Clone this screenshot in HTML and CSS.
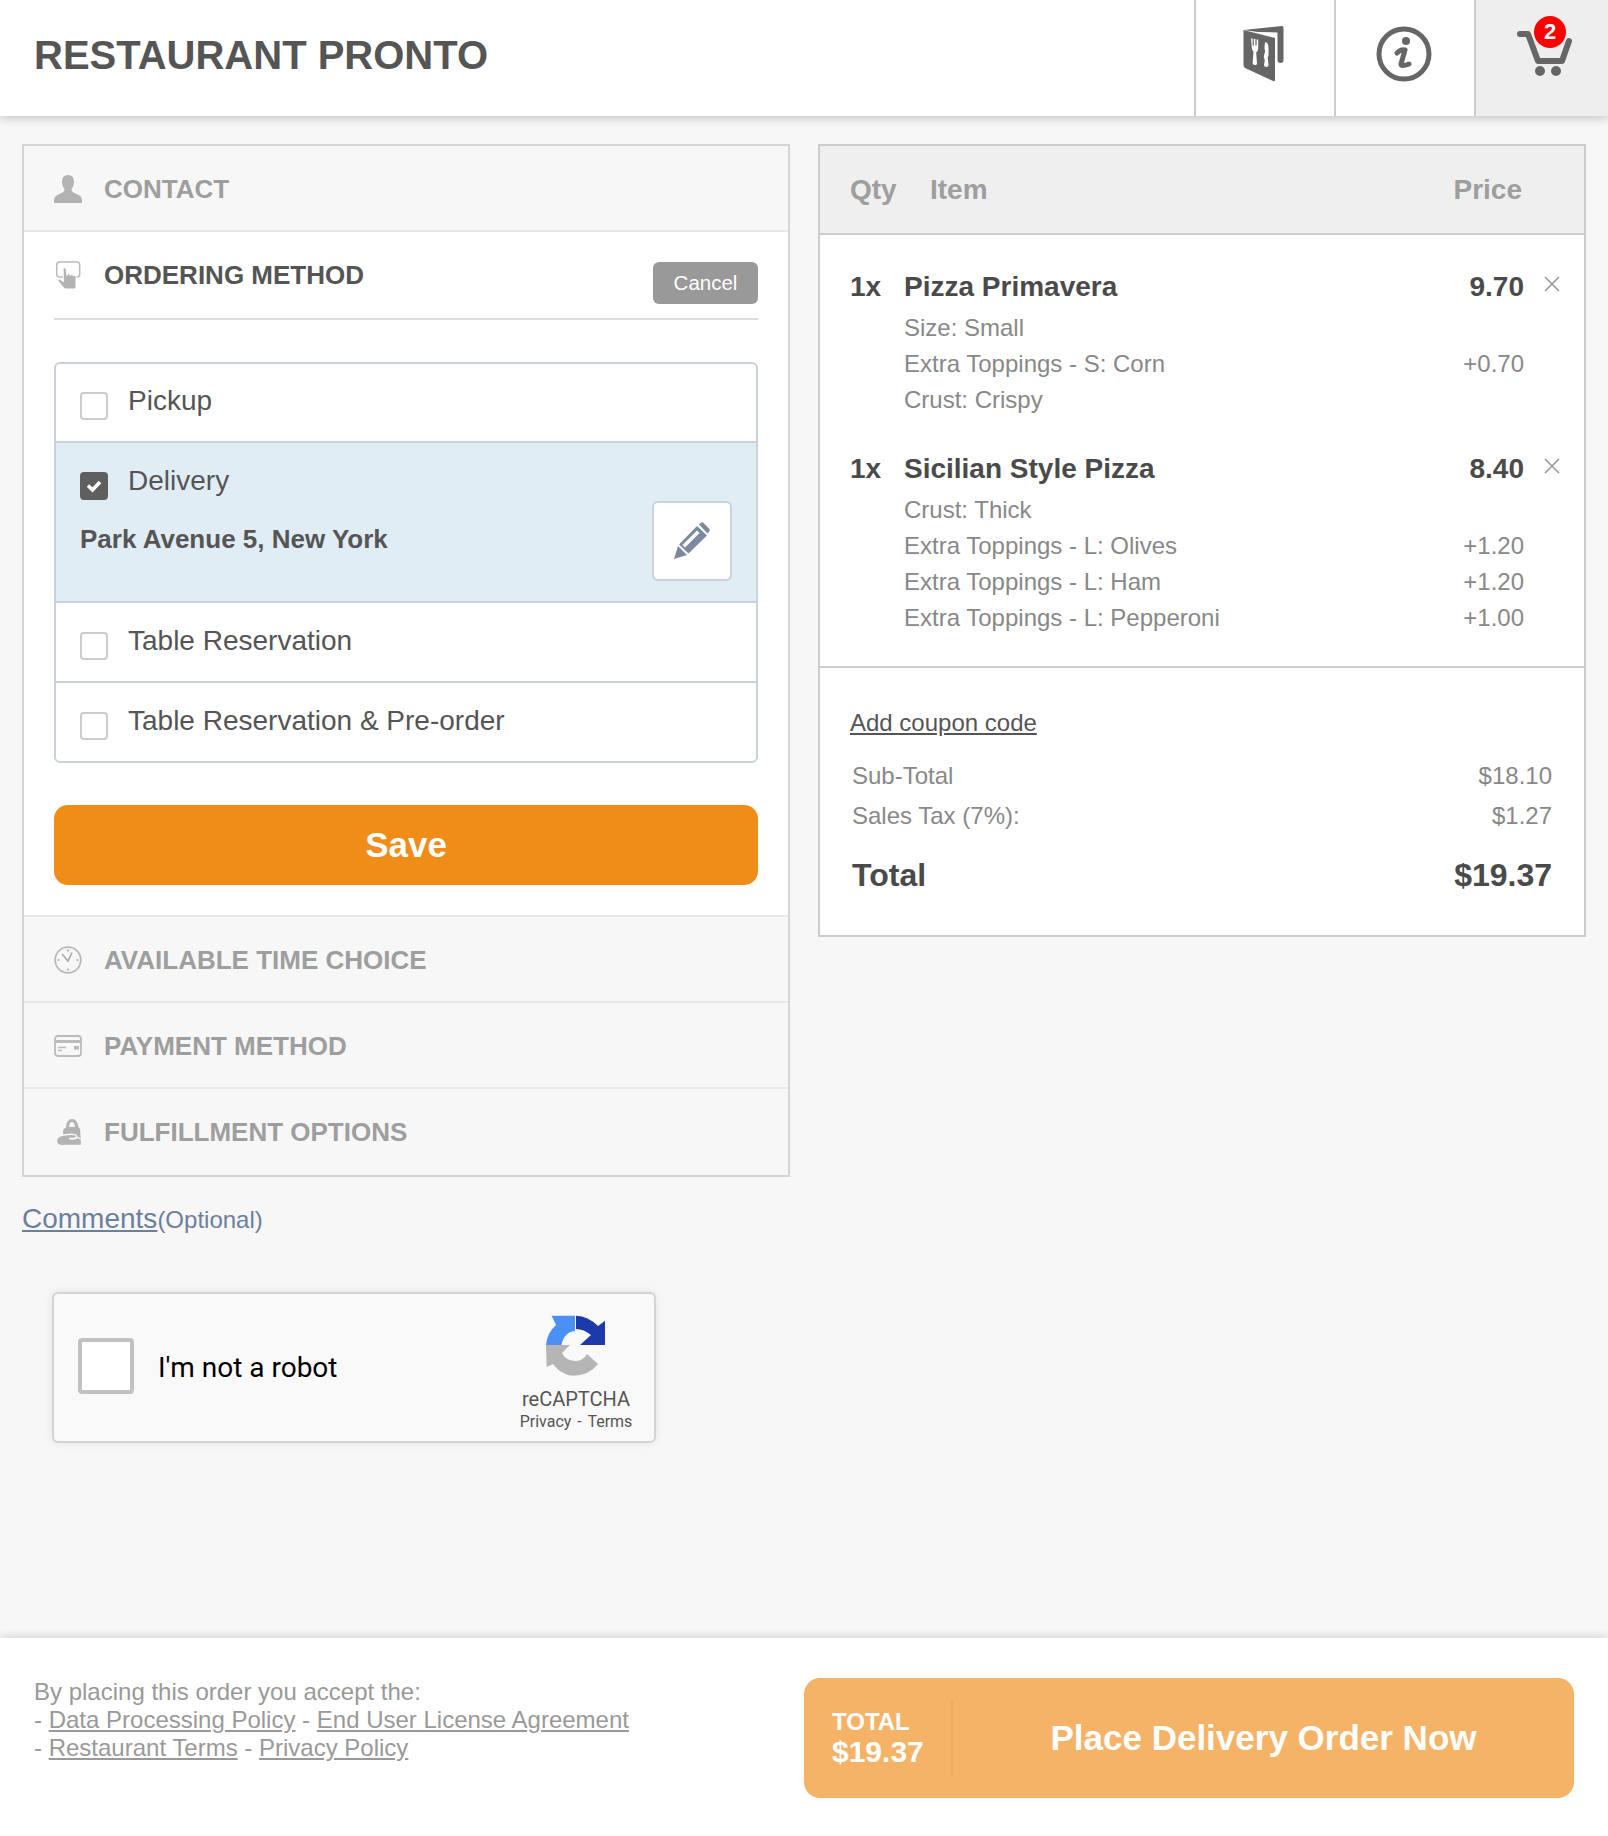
FILE: index.html
```html
<!DOCTYPE html>
<html lang="en">
<head>
<meta charset="utf-8">
<title>Restaurant Pronto</title>
<link rel="stylesheet" href="styles.css">
</head>
<body>
<div class="page">
  <header class="topbar">
    <h1 class="brand">RESTAURANT PRONTO</h1>
    <a class="nav-btn">
      <svg width="44" height="60" viewBox="0 0 44 60"><path class="fill-dark" d="M.5 6 L39 2 Q40.500 2 40.500 3.500 V36 Q40.500 39 37.500 39 Q34.500 39 34.500 36 V8.500 L15 8 Z"/><path class="fill-dark" d="M.5 6 L32 14 V56 Q32 58 30 57 L2 44 Q.5 43 .5 41 Z"/><path fill="#fff" d="M8 14.500 h1.6 v7 h1.200 v-6.500 h1.600 v6.500 h1.200 v-6 h1.600 v9 q0 3 -2 4 l.8 11 q0 2 -2.300 1.500 q-2.500 -.5 -2 -3 l.8 -10.500 q-1.700 -1 -1.700 -4z M22.500 18 q3 1 3 6 l0 8 l-.8 1 l.8 8 q0 2 -2 2 q-2.500 0 -2.500 -2.500 l.8 -4 l-1 -4 l1 -4 q.5 -2 -.3 -4 q0 -5 1 -6.500z"/></svg>
    </a>
    <a class="nav-btn">
      <svg width="58" height="58" viewBox="0 0 58 58"><circle cx="28" cy="29" r="25" fill="none" stroke="#666" stroke-width="5"/><circle cx="30" cy="16" r="4" fill="#666"/><path d="M21 28 Q25 24 29 25 L25 39 Q25 42 33 39" fill="none" stroke="#666" stroke-width="5" stroke-linecap="round" stroke-linejoin="round"/></svg>
    </a>
    <a class="nav-btn nav-btn-active">
      <svg width="60" height="54" viewBox="0 0 60 54"><path d="M8 10 H16 L26 37 H50 L57 17" fill="none" stroke="#666" stroke-width="6" stroke-linecap="round" stroke-linejoin="round"/><circle cx="28" cy="47" r="5" fill="#666"/><circle cx="44" cy="47" r="5" fill="#666"/></svg>
      <span class="badge">2</span>
    </a>
  </header>

  <main class="content">
    <section class="accordion">
      <div class="acc-row acc-first">
        <svg class="acc-icon" width="28" height="28" viewBox="0 0 28 28"><path fill="#b3b3b3" d="M14 0 q6 0 6 7 q0 4 -2.500 7 q0 3 4 4.500 q6.500 2 6.500 6.500 v3 H0 v-3 q0 -4.500 6.500 -6.500 q4 -1.500 4 -4.500 Q8 11 8 7 q0 -7 6 -7z"/></svg>
        <span class="acc-title">CONTACT</span>
      </div>

      <div class="acc-open">
        <div class="open-head">
          <svg class="acc-icon" width="28" height="32" viewBox="0 0 28 32"><rect x="2.700" y="3" width="23" height="15" rx="3" fill="none" stroke="#bbb" stroke-width="1.500"/><path fill="#b3b3b3" stroke="#fff" d="M9 9.500 q1.500 -1.500 3 0 l1 7 l1 -2 q1 -.5 2 .5 v1.500 l1 -1 q1 -.5 2 .5 l.5 1 l1 -.5 q1.500 0 1.500 1.500 v10 q0 2 -2 2 h-8 q-2 0 -3 -2 l-5 -6 q-.5 -2 1.500 -2 l4 2.500z"/></svg>
          <span class="acc-title acc-title-active">ORDERING METHOD</span>
          <button class="cancel">Cancel</button>
        </div>
        <div class="options">
          <div class="option">
            <span class="check"></span><span class="opt-label">Pickup</span>
          </div>
          <div class="option option-selected">
            <span class="check check-on"><svg width="18" height="14" viewBox="0 0 18 14"><path d="M3 6.500 L7.500 11 L15 3" fill="none" stroke="#fff" stroke-width="3.500"/></svg></span><span class="opt-label">Delivery</span>
            <div class="address">Park Avenue 5, New York</div>
            <button class="edit">
              <svg width="36" height="38" viewBox="0 0 36 38"><path fill="#7b8a9e" d="M0 37 L4 24 L13 33Z"/><path fill="#7b8a9e" d="M5 22.500 L23 4 L33 13.500 L14.500 31.500Z M8.500 23 L11 25.500 L25.500 11 L23 8.500Z"/><path fill="#7b8a9e" d="M25 2.500 L27 .5 Q28 0 29 .5 L35.500 7 Q36 8 35.500 9 L33.500 11.500Z"/></svg>
            </button>
          </div>
          <div class="option">
            <span class="check"></span><span class="opt-label">Table Reservation</span>
          </div>
          <div class="option">
            <span class="check"></span><span class="opt-label">Table Reservation &amp; Pre-order</span>
          </div>
        </div>
        <button class="save">Save</button>
      </div>

      <div class="acc-row">
        <svg class="acc-icon" width="28" height="28" viewBox="0 0 28 28"><circle cx="14" cy="14" r="12.800" fill="none" stroke="#bbb" stroke-width="1.800"/><path d="M14 5.500 V3.500 M14 24.500 V22.500 M5.500 14 H3.500 M24.500 14 H22.500 M8 8 L14 15 L18 6.500" fill="none" stroke="#aaa" stroke-width="1.600"/></svg>
        <span class="acc-title">AVAILABLE TIME CHOICE</span>
      </div>
      <div class="acc-row">
        <svg class="acc-icon" width="28" height="22" viewBox="0 0 28 22"><rect x="1" y="1" width="26" height="20" rx="3" fill="none" stroke="#bbb" stroke-width="1.800"/><rect x="1" y="5" width="26" height="3" fill="#bbb"/><path d="M4 12.500 H12 M4 15.500 H8" stroke="#bbb" stroke-width="1.500"/><rect x="20" y="11" width="5" height="3.500" fill="#bbb"/></svg>
        <span class="acc-title">PAYMENT METHOD</span>
      </div>
      <div class="acc-row">
        <svg class="acc-icon" width="28" height="30" viewBox="0 0 28 30"><path fill="#b3b3b3" fill-rule="evenodd" d="M18 2 q5.500 0 6.500 8.500 l1.500 1 l1 15 H10 L9 13.500 q1 -2 3 -3 q.5 -8.500 6 -8.500z M15 10 h6 q-.5 -5 -3 -5 t-3 5z"/><path fill="#b3b3b3" stroke="#f7f7f7" stroke-width="1.300" d="M2.500 24 q0 -5.500 8 -6 q7 -1.500 11.500 0 q2 2.500 -2 3.500 l-5 0 q5 1.500 9 -1 l3.500 2 v6 H11 Q2.500 29.500 2.500 24z"/></svg>
        <span class="acc-title">FULFILLMENT OPTIONS</span>
      </div>
    </section>

    <section class="cart">
      <div class="cart-head">
        <span class="col-qty">Qty</span>
        <span class="col-item">Item</span>
        <span class="col-price">Price</span>
      </div>
      <div class="cart-items">
        <div class="item">
          <div class="item-row">
            <span class="qty">1x</span><span class="name">Pizza Primavera</span><span class="price">9.70</span>
            <svg class="remove" width="16" height="16" viewBox="0 0 16 16"><path d="M1 1 L15 15 M15 1 L1 15" stroke="#999" stroke-width="1.600"/></svg>
          </div>
          <div class="sub"><span>Size: Small</span></div>
          <div class="sub"><span>Extra Toppings - S: Corn</span><span>+0.70</span></div>
          <div class="sub"><span>Crust: Crispy</span></div>
        </div>
        <div class="item">
          <div class="item-row">
            <span class="qty">1x</span><span class="name">Sicilian Style Pizza</span><span class="price">8.40</span>
            <svg class="remove" width="16" height="16" viewBox="0 0 16 16"><path d="M1 1 L15 15 M15 1 L1 15" stroke="#999" stroke-width="1.600"/></svg>
          </div>
          <div class="sub"><span>Crust: Thick</span></div>
          <div class="sub"><span>Extra Toppings - L: Olives</span><span>+1.20</span></div>
          <div class="sub"><span>Extra Toppings - L: Ham</span><span>+1.20</span></div>
          <div class="sub"><span>Extra Toppings - L: Pepperoni</span><span>+1.00</span></div>
        </div>
      </div>
      <div class="totals">
        <a class="coupon">Add coupon code</a>
        <div class="tot-row tot-first"><span>Sub-Total</span><span>$18.10</span></div>
        <div class="tot-row"><span>Sales Tax (7%):</span><span>$1.27</span></div>
        <div class="tot-row tot-grand"><span>Total</span><span>$19.37</span></div>
      </div>
    </section>

    <div class="comments"><a class="comments-link">Comments</a><span class="optional">(Optional)</span></div>

    <div class="recaptcha">
      <span class="rc-box"></span>
      <span class="rc-label">I'm not a robot</span>
      <div class="rc-brand">
        <svg width="60" height="61" viewBox="0 0 60 61">
          <path fill="#4a90f5" d="M0 30 Q1 18 10 10 L5.600 .7 H29 V16 Q18 17 15.500 30Z"/>
          <path fill="#1c3aa9" d="M30 .7 Q42 1 52 11 L59 5.700 V30 H34 L45 20 Q38 14 30 14Z"/>
          <path fill="#b5b5b5" d="M0 30 H24 L16 38 Q20 46 30 46 Q37 46 41 39 L52 49 Q43 60.700 27 60.700 Q15 60 7 49 L.7 52Z"/>
        </svg>
        <span class="rc-name">reCAPTCHA</span>
        <span class="rc-links">Privacy - Terms</span>
      </div>
    </div>
  </main>

  <footer class="footer">
    <div class="legal">
      <div>By placing this order you accept the:</div>
      <div>- <a>Data Processing Policy</a> - <a>End User License Agreement</a></div>
      <div>- <a>Restaurant Terms</a> - <a>Privacy Policy</a></div>
    </div>
    <button class="place">
      <span class="place-total"><span class="pt-label">TOTAL</span><span class="pt-value">$19.37</span></span>
      <span class="place-text">Place Delivery Order Now</span>
    </button>
  </footer>
</div>
</body>
</html>
```
FILE: styles.css
```css
* { box-sizing: border-box; }
html, body { margin: 0; padding: 0; }
body { background: #f7f7f7; font-family: "Liberation Sans", Arial, sans-serif; color: #555; }
.page { width: 1608px; height: 1836px; display: flex; flex-direction: column; overflow: hidden; }

.topbar { height: 116px; background: #fff; display: flex; align-items: stretch; box-shadow: 0 2px 10px rgba(0,0,0,.22); position: relative; z-index: 2; padding-left: 34px; flex: none; }
.brand { margin: 0 auto 0 0; font-size: 40px; line-height: 111px; font-weight: 700; color: #555; }
.nav-btn { width: 140px; border-left: 2px solid #ccc; display: flex; align-items: center; justify-content: center; position: relative; padding-bottom: 8px; }
.fill-dark { fill: #666; }
.nav-btn-active { background: #eee; width: 134px; padding: 0 0 14px 0; }
.badge { position: absolute; left: 58px; top: 16px; width: 32px; height: 32px; border-radius: 50%; background: #f00; color: #fff; font-weight: 700; font-size: 22px; line-height: 32px; text-align: center; }

.content { flex: 1; display: grid; grid-template-columns: 768px 768px; column-gap: 28px; grid-template-rows: auto 1fr; padding: 28px 22px 0; align-items: start; }

.accordion { grid-column: 1; grid-row: 1; border: 2px solid #d5d5d5; height: 1033px; }
.acc-row { height: 86px; display: flex; align-items: center; padding: 2px 30px 0; border-top: 2px solid #e8e8e8; }
.acc-first { border-top: 0; height: 84px; }
.acc-icon { width: 28px; flex: none; }
.acc-title { margin-left: 22px; font-size: 26px; font-weight: 700; color: #9e9e9e; }
.acc-title-active { color: #555; }

.acc-open { background: #fff; border-top: 2px solid #e8e8e8; padding: 0 30px 30px; height: 685px; }
.open-head { height: 88px; display: flex; align-items: center; border-bottom: 2px solid #ddd; }
.open-head .cancel { margin-left: auto; margin-top: 16px; }
.cancel { width: 105px; height: 42px; border: 0; border-radius: 6px; background: #999; color: #fff; font: 20.5px "Liberation Sans", Arial, sans-serif; padding: 0; }

.options { margin-top: 42px; border: 2px solid #c9d2dc; border-radius: 6px; overflow: hidden; }
.option { height: 80px; position: relative; display: flex; align-items: flex-start; padding: 26px 24px 0; border-top: 2px solid #c9d2dc; }
.option:first-child { border-top: 0; height: 77px; padding-top: 25px; }
.option-selected { background: #e1edf5; height: 160px; flex-wrap: wrap; align-content: flex-start; }
.check { width: 28px; height: 28px; border: 2px solid #ccc; border-radius: 4px; background: #fff; margin-right: 20px; margin-top: 3px; flex: none; }
.check-on { background: #5f5f5f; border-color: #5f5f5f; display: flex; align-items: center; justify-content: center; }
.opt-label { font-size: 28px; line-height: 32px; color: #555; margin: -4px 0 4px; }
.address { flex: 0 0 100%; margin-top: 22px; font-size: 26px; line-height: 32px; font-weight: 700; color: #555; }
.edit { position: absolute; right: 24px; top: 58px; width: 80px; height: 80px; background: #fff; border: 2px solid #c9d2dc; border-radius: 6px; padding: 0; display: flex; align-items: center; justify-content: center; }

.save { display: block; width: 100%; height: 80px; margin-top: 42px; border: 0; border-radius: 14px; background: #f08c18; color: #fff; font: 700 35px "Liberation Sans", Arial, sans-serif; padding: 0; }

.cart { grid-column: 2; grid-row: 1; border: 2px solid #ccc; background: #fff; height: 793px; }
.cart-head { height: 89px; background: #efefef; border-bottom: 2px solid #ccc; display: flex; align-items: center; padding: 0 62px 0 30px; font-size: 28px; font-weight: 700; color: #9e9e9e; }
.col-qty { width: 80px; }
.col-price { margin-left: auto; }
.col-item { flex: none; }

.cart-items { padding: 29px 30px 29px; border-bottom: 2px solid #ccc; height: 433px; }
.item + .item { margin-top: 28px; }
.item-row { display: flex; align-items: center; height: 46px; position: relative; padding-right: 30px; color: #4a4a4a; font-size: 28px; font-weight: 700; }
.qty { width: 54px; }
.price { margin-left: auto; }
.remove { position: absolute; right: -6px; top: 12px; }
.sub { height: 36px; display: flex; justify-content: space-between; padding: 0 30px 0 54px; font-size: 24px; line-height: 36px; color: #888; }

.totals { padding: 40px 32px 0 30px; }
.coupon { display: block; font-size: 24px; line-height: 30px; color: #555; text-decoration: underline; }
.tot-row { display: flex; justify-content: space-between; font-size: 24px; line-height: 40px; color: #888; padding-left: 2px; }
.tot-first { margin-top: 18px; }
.tot-grand { margin-top: 19px; font-size: 32px; font-weight: 700; color: #4a4a4a; }

.comments { grid-column: 1 / -1; grid-row: 2; margin-top: 22px; line-height: 40px; }
.comments-link { font-size: 28px; color: #6c7f9c; text-decoration: underline; }
.optional { font-size: 24px; color: #6c7f9c; }

.recaptcha { grid-column: 1 / -1; grid-row: 2; margin: 115px 0 0 30px; width: 604px; height: 151px; border: 2px solid #d3d3d3; border-radius: 6px; background: #f9f9f9; box-shadow: 0 0 8px rgba(0,0,0,.08); display: flex; align-items: center; padding: 0 20px 0 24px; }
.rc-box { width: 56px; height: 56px; border: 4px solid #c1c1c1; border-radius: 4px; background: #fff; flex: none; margin-bottom: 3px; }
.rc-label { margin-left: 24px; font: 28px Roboto, sans-serif; color: #000; }
.rc-brand { margin: 12px 1px 0 auto; display: flex; flex-direction: column; align-items: center; font-family: Roboto, sans-serif; color: #555; width: 114px; }
.rc-name { font-size: 20px; line-height: 24px; margin-top: 11px; }
.rc-links { font-size: 16px; line-height: 20px; margin-top: 1px; word-spacing: 2px; }

.footer { flex: none; height: 198px; background: #fff; box-shadow: 0 -2px 8px rgba(0,0,0,.14); position: relative; display: flex; justify-content: space-between; padding: 40px 34px 0 34px; }
.legal { font-size: 24px; line-height: 28px; color: #999; }
.legal a { text-decoration: underline; }
.place { width: 770px; height: 120px; border: 0; border-radius: 16px; background: #f5b368; color: #fff; display: flex; align-items: center; padding: 0; font-family: "Liberation Sans", Arial, sans-serif; font-weight: 700; }
.place-total { width: 149px; height: 78px; border-right: 2px solid #e9ab64; display: flex; flex-direction: column; justify-content: center; align-items: flex-start; padding-left: 28px; }
.pt-label { font-size: 24px; line-height: 28px; }
.pt-value { font-size: 30px; line-height: 32px; }
.place-text { flex: 1; text-align: center; font-size: 35px; }
```
